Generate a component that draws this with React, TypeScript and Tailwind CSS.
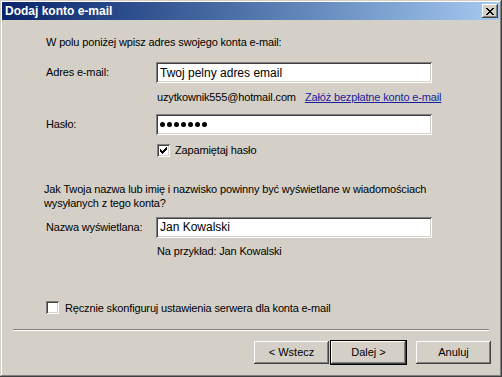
import type { ReactNode } from 'react';

const FONT = { fontFamily: '"Liberation Sans", Arial, sans-serif' };

function Field({ value, password }: { value?: string; password?: boolean }) {
  return (
    <div className="w-[276px] h-[21px] bg-white shadow-[inset_1px_1px_#808080,inset_-1px_-1px_#ffffff,inset_2px_2px_#404040,inset_-2px_-2px_#d4d0c8] flex items-center pl-[4px] text-[12px] tracking-normal text-black">
      {password ? (
        <div className="flex gap-[2px]">
          {Array.from({ length: 7 }).map((_, i) => (
            <span key={i} className="w-[5px] h-[5px] rounded-full bg-black" />
          ))}
        </div>
      ) : (
        <span>{value}</span>
      )}
    </div>
  );
}

function CheckBox({ checked }: { checked?: boolean }) {
  return (
    <div className="w-[13px] h-[13px] bg-white shadow-[inset_1px_1px_#808080,inset_-1px_-1px_#ffffff,inset_2px_2px_#404040,inset_-2px_-2px_#d4d0c8] flex items-center justify-center">
      {checked && (
        <svg width="7" height="7" viewBox="0 0 7 7">
          <path d="M0 2h1v1h1v1h1v-1h1v-1h1v-1h1v-1h1v3h-1v1h-1v1h-1v1h-1v1h-1v-1h-1v-1h-1z" fill="#000" />
        </svg>
      )}
    </div>
  );
}

function Button({ children, isDefault }: { children: ReactNode; isDefault?: boolean }) {
  return (
    <div className={isDefault ? 'border border-black' : 'border border-transparent'}>
      <div className="w-[75px] h-[23px] bg-[#d4d0c8] shadow-[inset_-1px_-1px_#404040,inset_1px_1px_#ffffff,inset_-2px_-2px_#808080,inset_2px_2px_#d4d0c8] flex items-center justify-center text-[11px] text-black">
        {children}
      </div>
    </div>
  );
}

export default function App() {
  return (
    <div
      style={FONT}
      className="w-[502px] h-[377px] bg-[#d4d0c8] p-[2px] flex flex-col shadow-[inset_-1px_-1px_#404040,inset_1px_1px_#d4d0c8,inset_-2px_-2px_#808080,inset_2px_2px_#ffffff] text-[11px] text-black"
    >
      <div className="h-[18px] bg-gradient-to-r from-[#0a246a] to-[#a6caf0] flex items-center justify-between pl-[3px] pr-[2px]">
        <span className="text-white font-bold text-[12px] leading-none">Dodaj konto e-mail</span>
        <div className="w-[16px] h-[14px] bg-[#d4d0c8] shadow-[inset_-1px_-1px_#404040,inset_1px_1px_#ffffff,inset_-2px_-2px_#808080,inset_2px_2px_#d4d0c8] flex items-center justify-center">
          <svg width="8" height="7" viewBox="0 0 8 7">
            <path d="M0 0h2v1h1v1h2v-1h1v-1h2v1h-1v1h-1v1h-1v1h1v1h1v1h1v1h-2v-1h-1v-1h-2v1h-1v1h-2v-1h1v-1h1v-1h1v-1h-1v-1h-1v-1h-1z" fill="#000" />
          </svg>
        </div>
      </div>

      <div className="flex-1 flex flex-col pl-[44px] pr-[10px] tracking-[-0.15px]">
        <div className="mt-[16px] leading-[13px]">W polu poniżej wpisz adres swojego konta e-mail:</div>

        <div className="mt-[13px] flex items-center">
          <span className="w-[110px]">Adres e-mail:</span>
          <Field value="Twoj pelny adres email" />
        </div>
        <div className="mt-[8px] ml-[111px] flex gap-[9px] leading-[13px]">
          <span>uzytkownik555@hotmail.com</span>
          <span className="text-[#1c1c9c] underline">Załóż bezpłatne konto e-mail</span>
        </div>

        <div className="mt-[10px] flex items-center">
          <span className="w-[110px]">Hasło:</span>
          <Field password />
        </div>
        <div className="mt-[7px] ml-[111px] flex items-center gap-[5px]">
          <CheckBox checked />
          <span>Zapamiętaj hasło</span>
        </div>

        <div className="mt-[23px] leading-[14px] -ml-[2px] w-[400px]">
          Jak Twoja nazwa lub imię i nazwisko powinny być wyświetlane w wiadomościach wysyłanych z tego konta?
        </div>

        <div className="mt-[7px] flex items-center">
          <span className="w-[110px]">Nazwa wyświetlana:</span>
          <Field value="Jan Kowalski" />
        </div>
        <div className="mt-[7px] ml-[111px] leading-[13px]">Na przykład: Jan Kowalski</div>

        <div className="mt-[42px] flex items-center gap-[6px]">
          <CheckBox />
          <span>Ręcznie skonfiguruj ustawienia serwera dla konta e-mail</span>
        </div>
      </div>

      <div className="mx-[11px] h-[2px] border-t border-[#808080] border-b border-b-white" />

      <div className="h-[44px] flex items-start justify-end pt-[9px] pr-[8px] gap-[8px]">
        <div className="flex">
          <Button>&lt; Wstecz</Button>
          <Button isDefault>Dalej &gt;</Button>
        </div>
        <Button>Anuluj</Button>
      </div>
    </div>
  );
}
